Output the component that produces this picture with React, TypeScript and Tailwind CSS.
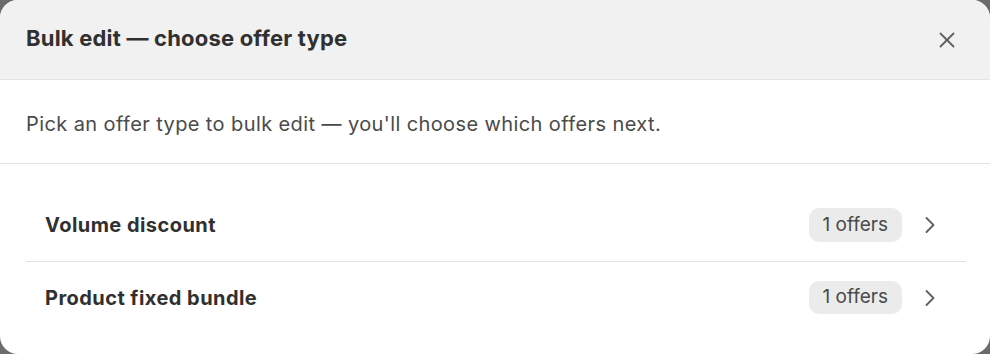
import { ChevronRight, X } from "lucide-react";

const offerTypes = [
  { id: "volume", label: "Volume discount", count: 1 },
  { id: "bundle", label: "Product fixed bundle", count: 1 },
];

export default function App() {
  return (
    <div className="h-[354px] w-[990px] bg-[#6b6b6b]" style={{ fontFamily: "Inter, 'Noto Sans', sans-serif" }}>
      <div className="flex h-full flex-col overflow-hidden rounded-[18px] bg-white">
        <header className="flex h-[80px] shrink-0 items-center justify-between border-b border-[#e3e3e3] bg-[#f1f1f1] pl-[26px] pr-[27px]">
          <h2 className="pb-[2px] text-[22px] font-bold tracking-[0.2px] text-[#303030]">Bulk edit — choose offer type</h2>
          <button className="flex h-8 w-8 items-center justify-center text-[#616161]">
            <X size={26} strokeWidth={1.7} />
          </button>
        </header>

        <div className="flex h-[84px] shrink-0 items-center border-b border-[#e3e3e3] px-[26px] pt-[5px]">
          <p className="text-[20px] tracking-[0.4px] text-[#4a4a4a]">Pick an offer type to bulk edit — you'll choose which offers next.</p>
        </div>

        <ul className="pl-[26px] pr-[24px] pt-[25px]">
          {offerTypes.map((t, i) => (
            <li
              key={t.id}
              className={`flex h-[72px] cursor-pointer items-center justify-between pl-[19px] pr-[22px] ${i > 0 ? "border-t border-[#e3e3e3]" : ""}`}
            >
              <span className="text-[20px] font-bold tracking-[0.45px] text-[#303030]">{t.label}</span>
              <div className="flex items-center gap-[14px]">
                <span className="rounded-[10px] bg-[#ebebeb] px-[14px] py-[2.5px] text-[19px] text-[#4a4a4a]">{t.count} offers</span>
                <ChevronRight size={28} strokeWidth={1.6} className="text-[#616161]" />
              </div>
            </li>
          ))}
        </ul>
      </div>
    </div>
  );
}
